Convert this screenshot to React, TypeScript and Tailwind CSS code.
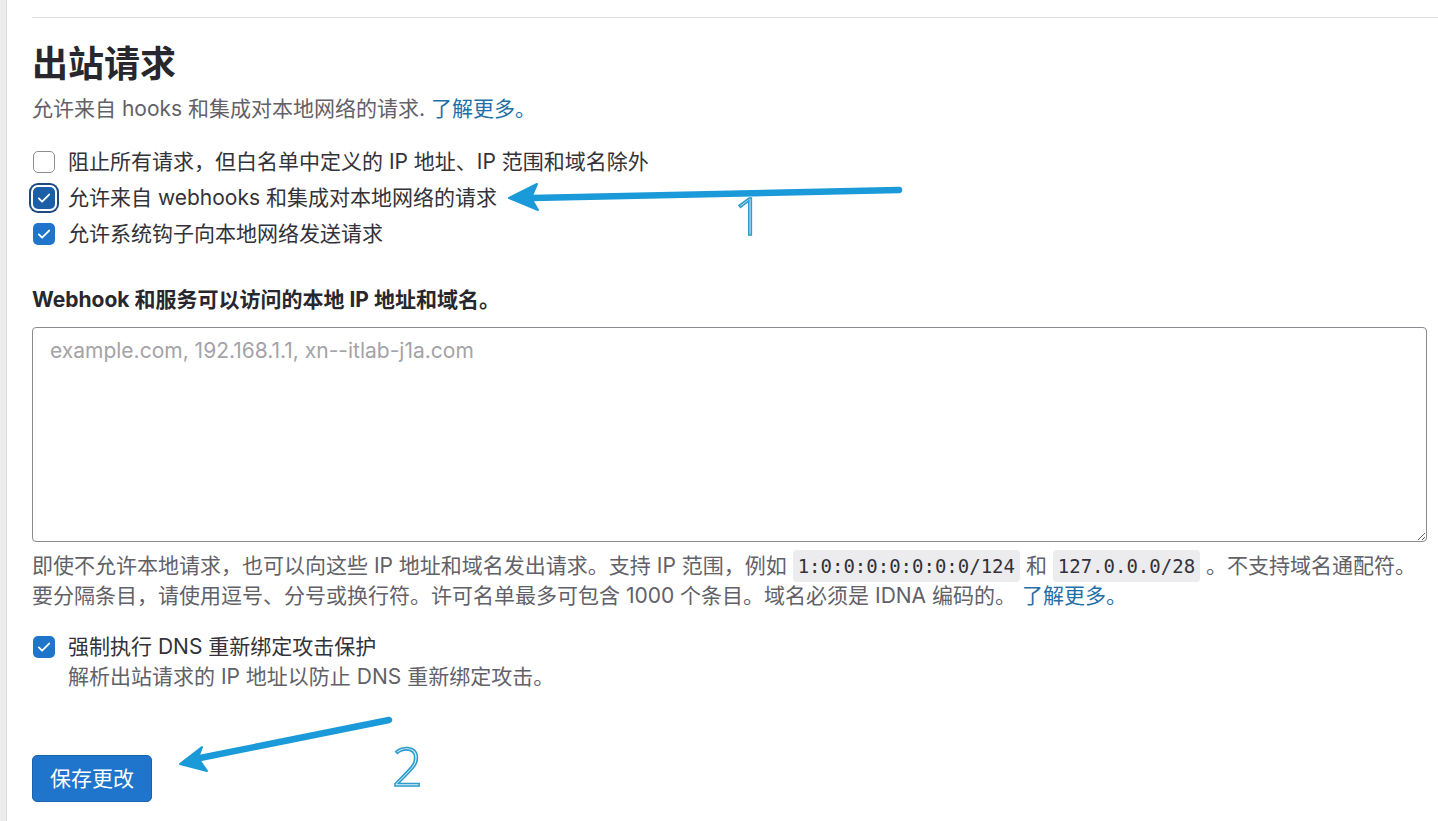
import React from 'react';

const font = { fontFamily: '"Inter", "Noto Sans CJK SC", sans-serif' };

const Check = ({ checked, focused }: { checked: boolean; focused?: boolean }) => {
    if (!checked) {
        return <span className="w-[22px] h-[22px] shrink-0 rounded-[5px] border border-[#8d8c92] bg-white" />;
    }
    return (
        <span
            className={
                'w-[22px] h-[22px] shrink-0 rounded-[5px] flex items-center justify-center ' +
                (focused
                    ? 'bg-[#1b5fa6] shadow-[0_0_0_2px_#ffffff,0_0_0_4px_#1d4a80]'
                    : 'bg-[#1f75cb]')
            }
        >
            <svg width="18" height="18" viewBox="0 0 16 16" fill="none">
                <path d="M3.4 8.4l2.9 2.9 6.3-6.4" stroke="white" strokeWidth="1.6" strokeLinecap="round" strokeLinejoin="round" />
            </svg>
        </span>
    );
};

const Row = ({ checked, focused, children }: { checked: boolean; focused?: boolean; children: React.ReactNode }) => (
    <label className="flex items-center gap-[13px] h-9 pl-px">
        <Check checked={checked} focused={focused} />
        <span className="text-[21px] text-[#333238]">{children}</span>
    </label>
);

const Code = ({ children }: { children: React.ReactNode }) => (
    <code
        className="rounded-[4px] bg-[#ececef] px-[5px] py-[5px] text-[19px] text-[#333238]"
        style={{ fontFamily: '"DejaVu Sans Mono", monospace' }}
    >
        {children}
    </code>
);

export default function App() {
    return (
        <div className="relative flex min-h-[821px] w-[1438px] bg-white overflow-hidden" style={font}>
            <div className="w-[7px] shrink-0 bg-[#ececec] border-r border-[#dcdcdc]" />

            <main className="flex-1 pl-[25px] pr-[11px] pt-[17px]">
                <div className="h-px bg-[#dcdcde] mr-[-11px]" />

                <h2 className="mt-[24px] text-[36px] leading-[45px] font-bold text-[#28272d]">出站请求</h2>
                <p className="mt-[8px] text-[21px] leading-[27px] text-[#626168]">
                    允许来自 hooks 和集成对本地网络的请求. <a className="text-[#1f6fa8]">了解更多。</a>
                </p>

                <div className="mt-[22px] flex flex-col">
                    <Row checked={false}>阻止所有请求，但白名单中定义的 IP 地址、IP 范围和域名除外</Row>
                    <Row checked focused>允许来自 webhooks 和集成对本地网络的请求</Row>
                    <Row checked>允许系统钩子向本地网络发送请求</Row>
                </div>

                <div className="mt-[34px] text-[21px] leading-[27px] font-bold text-[#28272d]">
                    Webhook 和服务可以访问的本地 IP 地址和域名。
                </div>

                <textarea
                    className="mt-[14px] block w-full h-[215px] rounded-[4px] border border-[#8c8b91] px-[17px] py-[8px] text-[21px] leading-[30px] text-[#333238] placeholder:text-[#a4a3a8] outline-none"
                    placeholder="example.com, 192.168.1.1, xn--itlab-j1a.com"
                    style={font}
                />

                <p className="mt-[9px] text-[21px] leading-[30px] text-[#626168]">
                    即使不允许本地请求，也可以向这些 IP 地址和域名发出请求。支持 IP 范围，例如 <Code>1:0:0:0:0:0:0:0/124</Code> 和{' '}
                    <Code>127.0.0.0/28</Code> 。不支持域名通配符。
                    <br />
                    要分隔条目，请使用逗号、分号或换行符。许可名单最多可包含 1000 个条目。域名必须是 IDNA 编码的。{' '}
                    <a className="text-[#1f6fa8]">了解更多。</a>
                </p>

                <div className="mt-[21px]">
                    <label className="flex items-center gap-[13px] h-[30px] pl-px">
                        <Check checked />
                        <span className="text-[21px] text-[#333238]">强制执行 DNS 重新绑定攻击保护</span>
                    </label>
                    <div className="pl-[36px] text-[21px] leading-[30px] text-[#626168]">
                        解析出站请求的 IP 地址以防止 DNS 重新绑定攻击。
                    </div>
                </div>

                <button className="mt-[63px] h-[47px] px-[17px] rounded-[5px] bg-[#1f75cb] border border-[#1a64ad] text-white text-[21px]">
                    保存更改
                </button>
            </main>

            {/* annotation overlay */}
            <svg className="absolute inset-0 pointer-events-none" width="1438" height="821" viewBox="0 0 1438 821">
                <g fill="#1a9ad8" stroke="#1a9ad8">
                    <line x1="899" y1="190" x2="532" y2="198" strokeWidth="6.5" strokeLinecap="round" />
                    <polygon points="509,198 537,184 531,198 538,210" strokeWidth="2" strokeLinejoin="round" />
                    <line x1="389" y1="720" x2="200" y2="758" strokeWidth="6.5" strokeLinecap="round" />
                    <polygon points="180,764 202,747 198,758 207,771" strokeWidth="2" strokeLinejoin="round" />
                </g>
                <text x="734" y="235" fontSize="52" fontWeight="300" fill="#eef8fd" stroke="#2f9ccc" strokeWidth="1.6" style={{ fontFamily: '"Open Sans", sans-serif' }}>
                    1
                </text>
                <text x="392" y="786" fontSize="54" fontWeight="300" fill="#eef8fd" stroke="#2f9ccc" strokeWidth="1.6" style={{ fontFamily: '"Open Sans", sans-serif' }}>
                    2
                </text>
            </svg>
        </div>
    );
}
